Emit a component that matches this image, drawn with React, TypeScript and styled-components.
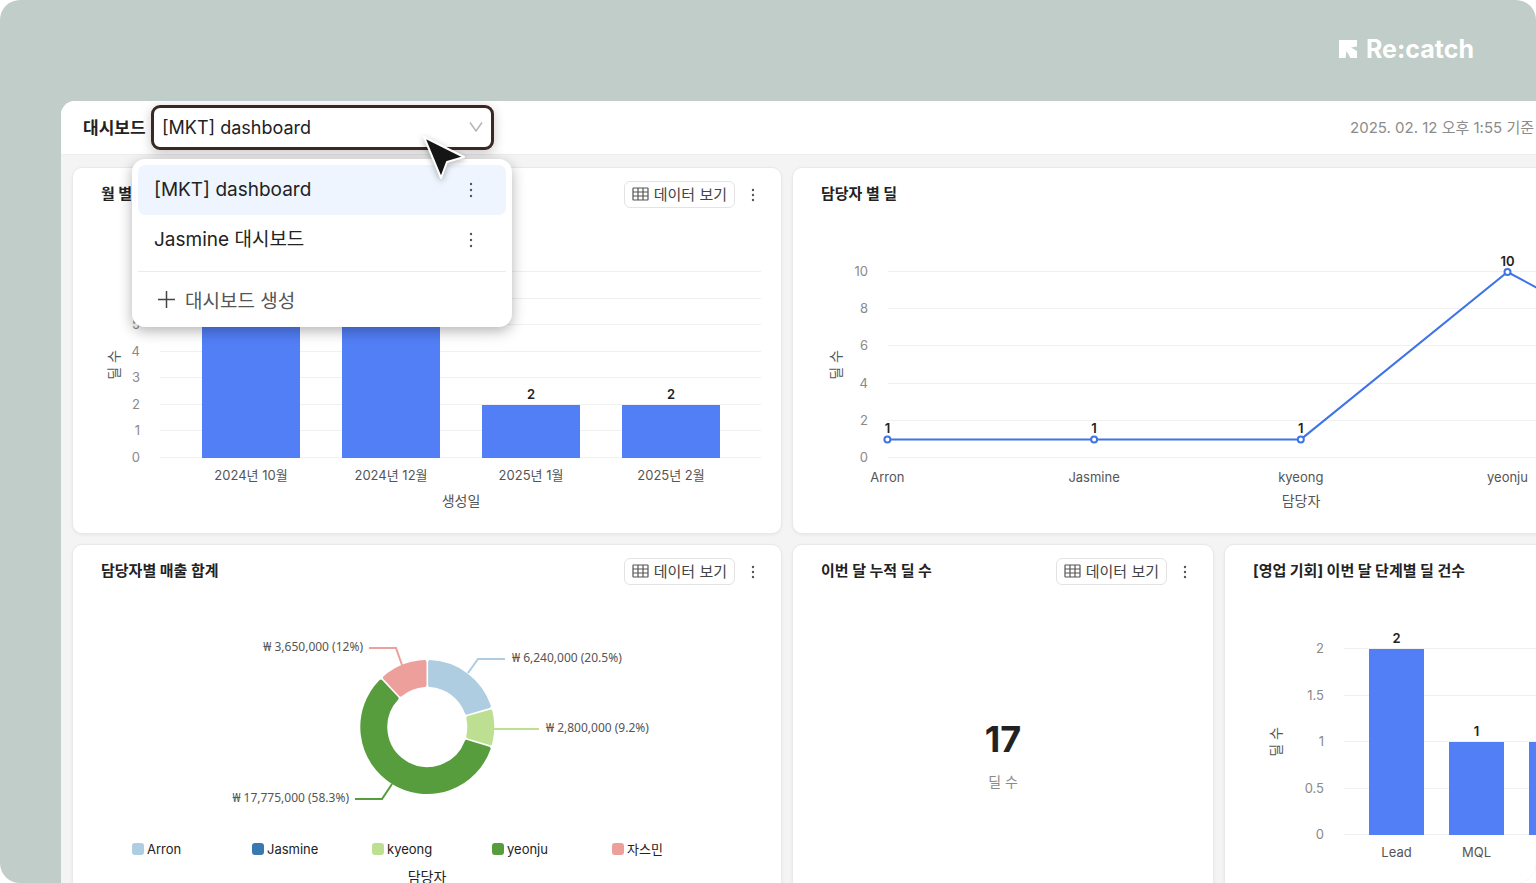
import React from "react";
import styled, { createGlobalStyle } from "styled-components";

const FONT = `Inter, "Noto Sans CJK KR", sans-serif`;
const BLUE = "#527ef6";

const GlobalStyle = createGlobalStyle`
  *, *::before, *::after { box-sizing: border-box; }
  body { margin: 0; background: #fff; color: #222; font-family: ${FONT}; }
  button, select { font: inherit; color: inherit; }
`;

const Frame = styled.div`
  height: 100vh;
  display: flex;
  flex-direction: column;
  overflow: hidden;
  border-radius: 20px;
  background: #c1cdc8;
`;

const BrandBar = styled.header`
  flex: none;
  height: 101px;
  display: flex;
  justify-content: flex-end;
  padding: 33px 62px 0 0;
`;

const Brand = styled.a`
  display: flex;
  align-items: center;
  gap: 9px;
  height: 32px;
  color: #fff;
  font-size: 25px;
  font-weight: 700;
  line-height: 32px;
  text-decoration: none;
`;

const Panel = styled.main`
  flex: 1;
  min-height: 0;
  margin-left: 61px;
  overflow: hidden;
  border-top-left-radius: 14px;
  background: #f4f4f4;
`;

const TopBar = styled.div`
  display: flex;
  align-items: center;
  height: 54px;
  padding: 0 2px 0 22px;
  background: #fff;
  border-bottom: 1px solid #ededed;
`;

const PickerLabel = styled.label`
  width: 68px;
  padding-bottom: 2px;
  font-size: 17px;
  font-weight: 600;
  white-space: nowrap;
`;

const Picker = styled.div`
  position: relative;
  z-index: 2;
  width: 343px;
`;

const PickerSelect = styled.select`
  display: block;
  width: 100%;
  height: 45px;
  padding: 0 36px 0 8px;
  appearance: none;
  border: 3px solid #3a2823;
  border-radius: 9px;
  background: #fff;
  box-shadow: 0 3px 12px rgba(0, 0, 0, 0.22);
  font-size: 18px;
  outline: none;
`;

const PickerArrow = styled.svg`
  position: absolute;
  top: 16px;
  right: 10px;
  pointer-events: none;
`;

const Pointer = styled.svg`
  position: absolute;
  top: 26px;
  left: 268px;
  z-index: 2;
  pointer-events: none;
  filter: drop-shadow(0 2px 3px rgba(0, 0, 0, 0.3));
`;

const Menu = styled.div`
  position: absolute;
  top: 54px;
  left: -19px;
  width: 380px;
  padding: 6px;
  border-radius: 13px;
  background: #fff;
  box-shadow: 0 4px 14px rgba(0, 0, 0, 0.3);
`;

const MenuRow = styled.div<{ $active?: boolean }>`
  display: flex;
  align-items: center;
  height: 50px;
  padding-right: 23px;
  border-radius: 7px;
  background: ${(p) => (p.$active ? "#eef5fe" : "transparent")};
`;

const MenuChoice = styled.button`
  flex: 1;
  padding: 0 0 0 16px;
  border: 0;
  background: none;
  font-size: 19px;
  line-height: 24px;
  text-align: left;
`;

const MenuCreate = styled.button`
  display: flex;
  align-items: center;
  gap: 10px;
  width: 100%;
  height: 50px;
  margin-top: 6px;
  padding: 6px 0 0 20px;
  border: 0;
  border-top: 1px solid #ebebeb;
  background: none;
  color: #555;
  font-size: 19px;
`;

const MoreButton = styled.button`
  display: flex;
  justify-content: center;
  align-items: center;
  width: 24px;
  height: 24px;
  padding: 0;
  border: 0;
  background: none;
`;

const Stamp = styled.time`
  margin-left: auto;
  padding-bottom: 2px;
  color: #8c8c8c;
  font-size: 15px;
  white-space: nowrap;
`;

const Board = styled.div`
  display: grid;
  grid-template-columns: repeat(12, minmax(0, 1fr));
  gap: 10px;
  margin-right: -266px;
  padding: 12px 12px 12px 11px;
`;

const Card = styled.section<{ $span: number }>`
  grid-column: span ${(p) => p.$span};
  display: flex;
  flex-direction: column;
  min-height: 367px;
  border: 1px solid #e9e9e9;
  border-radius: 10px;
  background: #fff;
  box-shadow: 0 1px 3px rgba(0, 0, 0, 0.06);
`;

const CardHead = styled.div`
  display: flex;
  align-items: center;
  height: 40px;
  padding: 13px 16px 0 28px;
`;

const CardTitle = styled.h2`
  flex: 1;
  margin: 0;
  padding-bottom: 2px;
  font-size: 15px;
  font-weight: 700;
  line-height: 20px;
  white-space: nowrap;
`;

const DataButton = styled.button`
  display: flex;
  align-items: center;
  gap: 5px;
  height: 27px;
  margin-right: 6px;
  padding: 0 7px 2px;
  border: 1px solid #e3e3e3;
  border-radius: 6px;
  background: #fff;
  color: #444;
  font-size: 15px;
  white-space: nowrap;
`;

const Chart = styled.svg`
  display: block;
  width: 100%;
  font-family: ${FONT};
  font-size: 13px;
`;

const TickText = styled.text`
  fill: #8a8a8a;
  text-anchor: end;
`;

const CategoryText = styled.text`
  fill: #555;
  text-anchor: middle;
`;

const ValueText = styled.text`
  fill: #222;
  font-weight: 600;
  text-anchor: middle;
`;

const AxisTitle = styled.text`
  fill: #555;
  font-size: 14px;
  text-anchor: middle;
`;

const SliceText = styled.text`
  fill: #555;
  font-family: "Noto Sans", "Noto Sans CJK KR", sans-serif;
  font-size: 12px;
`;

const Legend = styled.ul`
  display: flex;
  justify-content: center;
  margin: 0;
  padding: 0 0 0 10px;
  list-style: none;
`;

const LegendItem = styled.li`
  display: flex;
  align-items: center;
  gap: 3px;
  width: 120px;
  font-size: 13px;
  line-height: 20px;
`;

const Swatch = styled.span<{ $color: string }>`
  width: 12px;
  height: 12px;
  border-radius: 3px;
  background: ${(p) => p.$color};
`;

const LegendTitle = styled.p`
  margin: 8px 0 0;
  font-size: 14px;
  line-height: 20px;
  text-align: center;
`;

const Metric = styled.div`
  display: flex;
  flex-direction: column;
  align-items: center;
  gap: 9px;
  padding-top: 130px;
`;

const MetricValue = styled.strong`
  font-size: 36px;
  font-weight: 700;
  line-height: 48px;
`;

const MetricLabel = styled.span`
  color: #8a8a8a;
  font-size: 14px;
  line-height: 20px;
`;

function Dots({ size = 16 }: { size?: number }) {
  return (
    <svg width="4" height={size} viewBox={`0 0 4 ${size}`} fill="#555" aria-hidden="true">
      <circle cx="2" cy="2" r="1.2" />
      <circle cx="2" cy={size / 2} r="1.2" />
      <circle cx="2" cy={size - 2} r="1.2" />
    </svg>
  );
}

function TableIcon() {
  return (
    <svg width="17" height="14" viewBox="0 0 17 14" fill="none" stroke="#555" strokeWidth="1.2" aria-hidden="true">
      <rect x="1" y="1" width="15" height="12" rx="0.5" />
      <path d="M1 5h15M1 9h15M6 1v12M11 1v12" />
    </svg>
  );
}

function CardHeader({ title }: { title: string }) {
  return (
    <CardHead>
      <CardTitle>{title}</CardTitle>
      <DataButton type="button">
        <TableIcon />
        데이터 보기
      </DataButton>
      <MoreButton type="button" aria-label={`${title} 메뉴`}>
        <Dots size={14} />
      </MoreButton>
    </CardHead>
  );
}

type AxisProps = {
  ticks: string[];
  left: number;
  right: number;
  top: number;
  bottom: number;
  titleX: number;
  titleY: number;
};

function Axis({ ticks, left, right, top, bottom, titleX, titleY }: AxisProps) {
  const step = (bottom - top) / (ticks.length - 1);
  return (
    <g>
      {ticks.map((tick, i) => {
        const y = Math.round(bottom - i * step);
        return (
          <g key={tick}>
            <path d={`M${left} ${y - 0.5}H${right}`} stroke="#f0f0f0" />
            <TickText x={left - 20} y={y + 4}>{tick}</TickText>
          </g>
        );
      })}
      <AxisTitle transform={`translate(${titleX} ${titleY}) rotate(-90)`}>딜 수</AxisTitle>
    </g>
  );
}

type Bar = { label: string; value: number };

type BarsProps = { data: Bar[]; first: number; pitch: number; width: number; unit: number; bottom: number };

function Bars({ data, first, pitch, width, unit, bottom }: BarsProps) {
  return (
    <g>
      {data.map((bar, i) => {
        const x = first + i * pitch;
        const height = Math.round(bar.value * unit);
        return (
          <g key={bar.label}>
            <rect x={x} y={bottom - height} width={width} height={height} fill={BLUE} />
            <ValueText x={x + width / 2} y={bottom - height - 6}>{bar.value}</ValueText>
            <CategoryText x={x + width / 2} y={bottom + 22}>{bar.label}</CategoryText>
          </g>
        );
      })}
    </g>
  );
}

const monthly: Bar[] = [
  { label: "2024년 10월", value: 7 },
  { label: "2024년 12월", value: 7 },
  { label: "2025년 1월", value: 2 },
  { label: "2025년 2월", value: 2 },
];

const stages: Bar[] = [
  { label: "Lead", value: 2 },
  { label: "MQL", value: 1 },
  { label: "SQL", value: 1 },
];

const owners = [
  { label: "Arron", value: 1 },
  { label: "Jasmine", value: 1 },
  { label: "kyeong", value: 1 },
  { label: "yeonju", value: 10 },
  { label: "자스민", value: 4 },
];

function OwnerLine() {
  const points = owners.map((o, i) => ({ ...o, x: 94.4 + i * 206.7, y: 250 - o.value * 18.6 }));
  return (
    <g>
      <polyline points={points.map((p) => `${p.x},${p.y}`).join(" ")} fill="none" stroke="#3f74e6" strokeWidth="2" />
      {points.map((p) => (
        <g key={p.label}>
          <circle cx={p.x} cy={p.y} r="3" fill="#fff" stroke="#3f74e6" strokeWidth="2" />
          <ValueText x={p.x} y={p.y - 6}>{p.value}</ValueText>
          <CategoryText x={p.x} y={274}>{p.label}</CategoryText>
        </g>
      ))}
    </g>
  );
}

const sales = [
  { from: 0, to: 73.8, color: "#aecde1", text: "₩ 6,240,000 (20.5%)", x: 439, y: 77, anchor: "start", leader: "M395 88L405 74H432" },
  { from: 73.8, to: 106.9, color: "#bcdf92", text: "₩ 2,800,000 (9.2%)", x: 473, y: 147, anchor: "start", leader: "M420 144H466" },
  { from: 106.9, to: 316.8, color: "#579d3e", text: "₩ 17,775,000 (58.3%)", x: 276, y: 217, anchor: "end", leader: "M319 199L309 214H282" },
  { from: 316.8, to: 360, color: "#ed9f9b", text: "₩ 3,650,000 (12%)", x: 290, y: 66, anchor: "end", leader: "M329 80L323 63H296" },
] as const;

const CX = 354.3;
const CY = 142;
const OUTER = 67;
const INNER = 40;
const CORNER = 2;

/* Each slice is inset on all sides; its round-joined stroke fills the inset back and rounds the corners. */
function slicePath(from: number, to: number) {
  const inset = CORNER + 0.8;
  const ro = OUTER - CORNER;
  const ri = INNER + CORNER;
  const point = (r: number, a: number) => `${CX + r * Math.sin(a)} ${CY - r * Math.cos(a)}`;
  const a = (from * Math.PI) / 180;
  const b = (to * Math.PI) / 180;
  const dOut = Math.asin(inset / ro);
  const dIn = Math.asin(inset / ri);
  const large = b - a > Math.PI ? 1 : 0;
  return `M${point(ro, a + dOut)}A${ro} ${ro} 0 ${large} 1 ${point(ro, b - dOut)}L${point(ri, b - dIn)}A${ri} ${ri} 0 ${large} 0 ${point(ri, a + dIn)}Z`;
}

const legend = [
  { label: "Arron", color: "#aecde1" },
  { label: "Jasmine", color: "#3a78b0" },
  { label: "kyeong", color: "#bcdf92" },
  { label: "yeonju", color: "#579d3e" },
  { label: "자스민", color: "#ed9f9b" },
];

export default function App() {
  return (
    <>
      <GlobalStyle />
      <Frame>
        <BrandBar>
          <Brand href="#">
            <svg width="18" height="18" viewBox="0 0 18 18" fill="#fff" aria-hidden="true">
              <path d="M0 0H18V6.5L12 7.5L18 11V18H11.5L7.5 11L6.5 18H0Z" />
            </svg>
            Re:catch
          </Brand>
        </BrandBar>
        <Panel>
          <TopBar>
            <PickerLabel htmlFor="dashboard">대시보드</PickerLabel>
            <Picker>
              <PickerSelect id="dashboard" defaultValue="mkt">
                <option value="mkt">[MKT] dashboard</option>
                <option value="jasmine">Jasmine 대시보드</option>
              </PickerSelect>
              <PickerArrow width="16" height="12" viewBox="0 0 16 12" fill="none" stroke="#b5b5b5" strokeWidth="1.5" aria-hidden="true">
                <path d="M2 1.5L8 10L14 1.5" />
              </PickerArrow>
              <Menu>
                <MenuRow $active>
                  <MenuChoice type="button">[MKT] dashboard</MenuChoice>
                  <MoreButton type="button" aria-label="[MKT] dashboard 메뉴"><Dots /></MoreButton>
                </MenuRow>
                <MenuRow>
                  <MenuChoice type="button">Jasmine 대시보드</MenuChoice>
                  <MoreButton type="button" aria-label="Jasmine 대시보드 메뉴"><Dots /></MoreButton>
                </MenuRow>
                <MenuCreate type="button">
                  <svg width="17" height="17" viewBox="0 0 17 17" stroke="#444" strokeWidth="1.5" aria-hidden="true">
                    <path d="M8.5 0V17M0 8.5H17" />
                  </svg>
                  대시보드 생성
                </MenuCreate>
              </Menu>
              <Pointer width="50" height="52" viewBox="0 0 50 52" aria-hidden="true">
                <path d="M5 6L45 26L28 31L22 47Z" fill="#151515" stroke="#fff" strokeWidth="2" strokeLinejoin="round" />
              </Pointer>
            </Picker>
            <Stamp dateTime="2025-02-12T13:55">2025. 02. 12 오후 1:55 기준</Stamp>
          </TopBar>
          <Board>
            <Card $span={5}>
              <CardHeader title="월 별" />
              <Chart height="325" viewBox="0 0 708 325" role="img" aria-label="월 별 딜 수">
                <Axis ticks={["0", "1", "2", "3", "4", "5", "6", "7"]} left={87} right={688} top={64} bottom={250} titleX={46} titleY={157} />
                <Bars data={monthly} first={129} pitch={140} width={98} unit={26.6} bottom={250} />
                <AxisTitle x="388" y="298">생성일</AxisTitle>
              </Chart>
            </Card>
            <Card $span={7}>
              <CardHeader title="담당자 별 딜" />
              <Chart height="325" viewBox="0 0 996 325" role="img" aria-label="담당자 별 딜">
                <Axis ticks={["0", "2", "4", "6", "8", "10"]} left={95} right={921} top={64} bottom={250} titleX={48} titleY={157} />
                <OwnerLine />
                <AxisTitle x="508" y="298">담당자</AxisTitle>
              </Chart>
            </Card>
            <Card $span={5}>
              <CardHeader title="담당자별 매출 합계" />
              <Chart height="254" viewBox="0 0 708 254" role="img" aria-label="담당자별 매출 합계">
                {sales.map((s) => (
                  <g key={s.text}>
                    <path d={s.leader} fill="none" stroke={s.color} strokeWidth="2" />
                    <path d={slicePath(s.from, s.to)} fill={s.color} stroke={s.color} strokeWidth={CORNER * 2} strokeLinejoin="round" />
                    <SliceText x={s.x} y={s.y} textAnchor={s.anchor}>{s.text}</SliceText>
                  </g>
                ))}
              </Chart>
              <Legend>
                {legend.map((l) => (
                  <LegendItem key={l.label}>
                    <Swatch $color={l.color} />
                    {l.label}
                  </LegendItem>
                ))}
              </Legend>
              <LegendTitle>담당자</LegendTitle>
            </Card>
            <Card $span={3}>
              <CardHeader title="이번 달 누적 딜 수" />
              <Metric>
                <MetricValue>17</MetricValue>
                <MetricLabel>딜 수</MetricLabel>
              </Metric>
            </Card>
            <Card $span={4}>
              <CardHeader title="[영업 기회] 이번 달 단계별 딜 건수" />
              <Chart height="325" viewBox="0 0 564 325" role="img" aria-label="이번 달 단계별 딜 건수">
                <Axis ticks={["0", "0.5", "1", "1.5", "2"]} left={119} right={544} top={64} bottom={250} titleX={56} titleY={157} />
                <Bars data={stages} first={144} pitch={80} width={55} unit={93} bottom={250} />
              </Chart>
            </Card>
          </Board>
        </Panel>
      </Frame>
    </>
  );
}
